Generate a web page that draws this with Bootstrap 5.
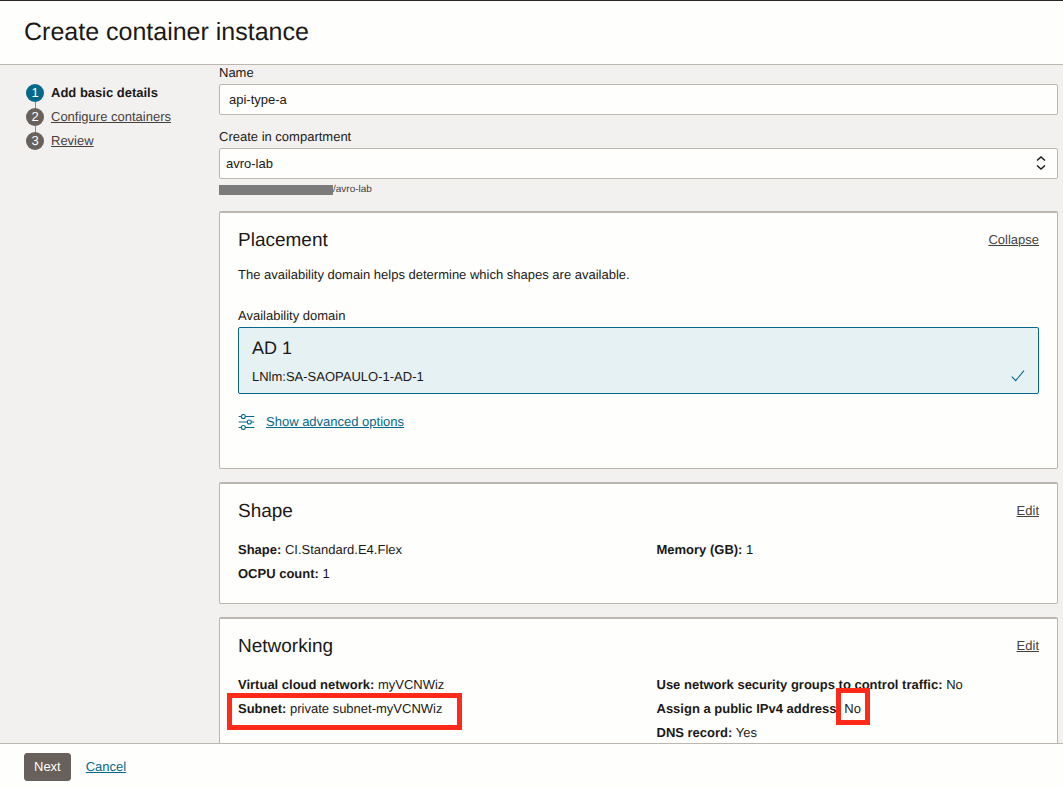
<!DOCTYPE html>
<html lang="en">
<head>
<meta charset="utf-8">
<meta name="viewport" content="width=device-width, initial-scale=1">
<title>Create container instance</title>
<link href="https://cdn.jsdelivr.net/npm/bootstrap@5.3.0/dist/css/bootstrap.min.css" rel="stylesheet">
<style>
  :root { --ink: #1b1917; --paper: #fefefc; --line: #bcb6b1; --teal: #04688a; --stone: #67605b; }
  body { font-family: "Liberation Sans", Arial, sans-serif; font-size: 13px; line-height: 16px; color: var(--ink); background: #f3f1f0; text-rendering: geometricPrecision; }
  a { color: #45403c; text-underline-offset: 1px; }
  a:hover { color: var(--ink); }
  a.teal-link { color: var(--teal); }
  .page-head { background: var(--paper); border-top: 1px solid #2b2523; border-bottom: 1px solid var(--line); padding: 15px 24px 16px; }
  .page-head h1 { font-size: 25px; line-height: 32px; font-weight: 400; }
  .page-foot { background: var(--paper); border-top: 1px solid var(--line); padding: 9px 24px 8px; gap: 15px; }
  .page-foot .btn { --bs-btn-color: #fefefc; --bs-btn-bg: var(--stone); --bs-btn-border-color: var(--stone); --bs-btn-hover-color: #fff; --bs-btn-hover-bg: #4f4945; --bs-btn-hover-border-color: #4f4945; --bs-btn-font-size: 13px; --bs-btn-line-height: 16px; --bs-btn-padding-x: 9px; --bs-btn-padding-y: 5px; --bs-btn-border-radius: 3px; }
  .steps-nav { width: 219px; padding: 19px 0 0 26px; }
  .steps-list { gap: 6px; }
  .step { gap: 7px; height: 18px; }
  .step-dot { width: 18px; height: 18px; line-height: 18px; background: var(--stone); color: #fefefc; }
  .step-dot.current { background: var(--teal); }
  .step + .step .step-dot::before { content: ""; position: absolute; left: 50%; bottom: 100%; width: 1px; height: 6px; background: #8f8883; }
  .form-pane { padding-right: 5px; min-width: 0; }
  .form-pane label.field-label, .group-label { display: block; margin: 0 0 3px; font-size: 13px; line-height: 16px; }
  .form-pane .form-control, .form-pane .form-select { height: 31px; font-size: 13px; line-height: 16px; color: var(--ink); background-color: var(--paper); border: 1px solid var(--line); border-radius: 2px; }
  .form-pane .form-control { padding: 6px 9px; }
  .form-pane .form-select { padding: 6px 28px 6px 6px; background-image: none; }
  .field { margin-bottom: 14px; }
  .updown { right: 12px; top: 8px; }
  .comp-path { font-size: 10px; margin: 3px 0 13px; color: #45403c; }
  .redacted { width: 114px; height: 10px; background: #7b7b7b; }
  .panel { background: var(--paper); border: 1px solid var(--line); border-top-width: 2px; border-radius: 2px; padding: 14px 18px 17px; margin-bottom: 13px; }
  .panel-tall { padding-bottom: 36px; }
  .panel h2 { font-size: 19px; line-height: 28px; font-weight: 400; margin: 0; }
  .panel-top { margin-bottom: 12px; line-height: 26px; }
  .lead-text { margin-bottom: 25px; }
  .ad-option { background: #e6f1f4; border: 1px solid var(--teal); border-radius: 2px; padding: 8px 13px; cursor: pointer; }
  .ad-title { font-size: 18px; line-height: 24px; margin-bottom: 9px; }
  .advanced { margin-top: 18px; line-height: 20px; gap: 10px; }
  .facts { --bs-gutter-x: 36px; line-height: 24px; }
  .callout-box { border: 5px solid #ff2a1a; pointer-events: none; }
  .callout-subnet { left: -11px; right: -20px; top: -8px; bottom: -14px; }
  .callout-no { left: -8px; right: -9px; top: -13px; bottom: -9px; }
</style>
</head>
<body>
<div class="d-flex flex-column vh-100">
  <header class="page-head flex-shrink-0"><h1 class="m-0">Create container instance</h1></header>

  <div class="d-flex flex-grow-1 overflow-hidden">
    <nav class="steps-nav flex-shrink-0" aria-label="Steps">
      <ol class="steps-list list-unstyled d-flex flex-column m-0">
        <li class="step d-flex align-items-center" aria-current="step"><span class="step-dot current rounded-circle text-center position-relative">1</span><strong>Add basic details</strong></li>
        <li class="step d-flex align-items-center"><span class="step-dot rounded-circle text-center position-relative">2</span><a href="#containers">Configure containers</a></li>
        <li class="step d-flex align-items-center"><span class="step-dot rounded-circle text-center position-relative">3</span><a href="#review">Review</a></li>
      </ol>
    </nav>

    <main class="form-pane flex-grow-1">
      <div class="field">
        <label class="field-label" for="name">Name</label>
        <input class="form-control" id="name" type="text" value="api-type-a">
      </div>
      <div>
        <label class="field-label" for="compartment">Create in compartment</label>
        <div class="position-relative">
          <select class="form-select" id="compartment"><option selected>avro-lab</option></select>
          <svg class="updown position-absolute pe-none" width="10" height="14" viewBox="0 0 10 14" fill="none" stroke="#1b1917" stroke-width="1.4" aria-hidden="true"><path d="M1 4.6 5 1l4 3.6M1 9.4 5 13l4-3.6"/></svg>
        </div>
      </div>
      <div class="comp-path d-flex align-items-center"><span class="redacted"></span>/avro-lab</div>

      <section class="panel panel-tall">
        <div class="panel-top d-flex justify-content-between align-items-start"><h2>Placement</h2><a href="#collapse">Collapse</a></div>
        <p class="lead-text">The availability domain helps determine which shapes are available.</p>
        <div class="group-label" id="ad-label">Availability domain</div>
        <div role="radiogroup" aria-labelledby="ad-label">
          <input class="visually-hidden" type="radio" name="ad" id="ad1" checked>
          <label class="ad-option d-flex justify-content-between align-items-end" for="ad1">
            <span><span class="ad-title d-block">AD 1</span><span class="d-block">LNlm:SA-SAOPAULO-1-AD-1</span></span>
            <svg class="flex-shrink-0" width="14" height="16" viewBox="0 0 14 16" fill="none" stroke="#04688a" stroke-width="1.1" aria-hidden="true"><path d="M.8 7.6 4.7 11.6 13 1.6"/></svg>
          </label>
        </div>
        <div class="advanced d-flex align-items-center">
          <svg width="18" height="16" viewBox="0 0 18 16" fill="none" stroke="#04688a" stroke-width="1.1" aria-hidden="true"><path d="M.7 2.5h2.6M7.3 2.5h9M.7 8h8.6M13.3 8h3M.7 13.5h2.6M7.3 13.5h9"/><circle cx="5.3" cy="2.5" r="2"/><circle cx="11.3" cy="8" r="2"/><circle cx="5.3" cy="13.5" r="2"/></svg>
          <a class="teal-link" href="#advanced">Show advanced options</a>
        </div>
      </section>

      <section class="panel">
        <div class="panel-top d-flex justify-content-between align-items-start"><h2>Shape</h2><a href="#edit-shape">Edit</a></div>
        <div class="row facts">
          <div class="col-6">
            <div><strong>Shape:</strong> CI.Standard.E4.Flex</div>
            <div><strong>OCPU count:</strong> 1</div>
          </div>
          <div class="col-6">
            <div><strong>Memory (GB):</strong> 1</div>
          </div>
        </div>
      </section>

      <section class="panel">
        <div class="panel-top d-flex justify-content-between align-items-start"><h2>Networking</h2><a href="#edit-networking">Edit</a></div>
        <div class="row facts">
          <div class="col-6">
            <div><strong>Virtual cloud network:</strong> myVCNWiz</div>
            <div><span class="position-relative"><strong>Subnet:</strong> private subnet-myVCNWiz<span class="callout-box callout-subnet position-absolute"></span></span></div>
          </div>
          <div class="col-6">
            <div><strong>Use network security groups to control traffic:</strong> No</div>
            <div><strong>Assign a public IPv4 address:</strong> <span class="position-relative">No<span class="callout-box callout-no position-absolute"></span></span></div>
            <div><strong>DNS record:</strong> Yes</div>
          </div>
        </div>
      </section>
    </main>
  </div>

  <footer class="page-foot d-flex align-items-center flex-shrink-0">
    <button class="btn" type="button">Next</button>
    <a class="teal-link" href="#cancel">Cancel</a>
  </footer>
</div>
<script src="https://cdn.jsdelivr.net/npm/bootstrap@5.3.0/dist/js/bootstrap.bundle.min.js"></script>
</body>
</html>
